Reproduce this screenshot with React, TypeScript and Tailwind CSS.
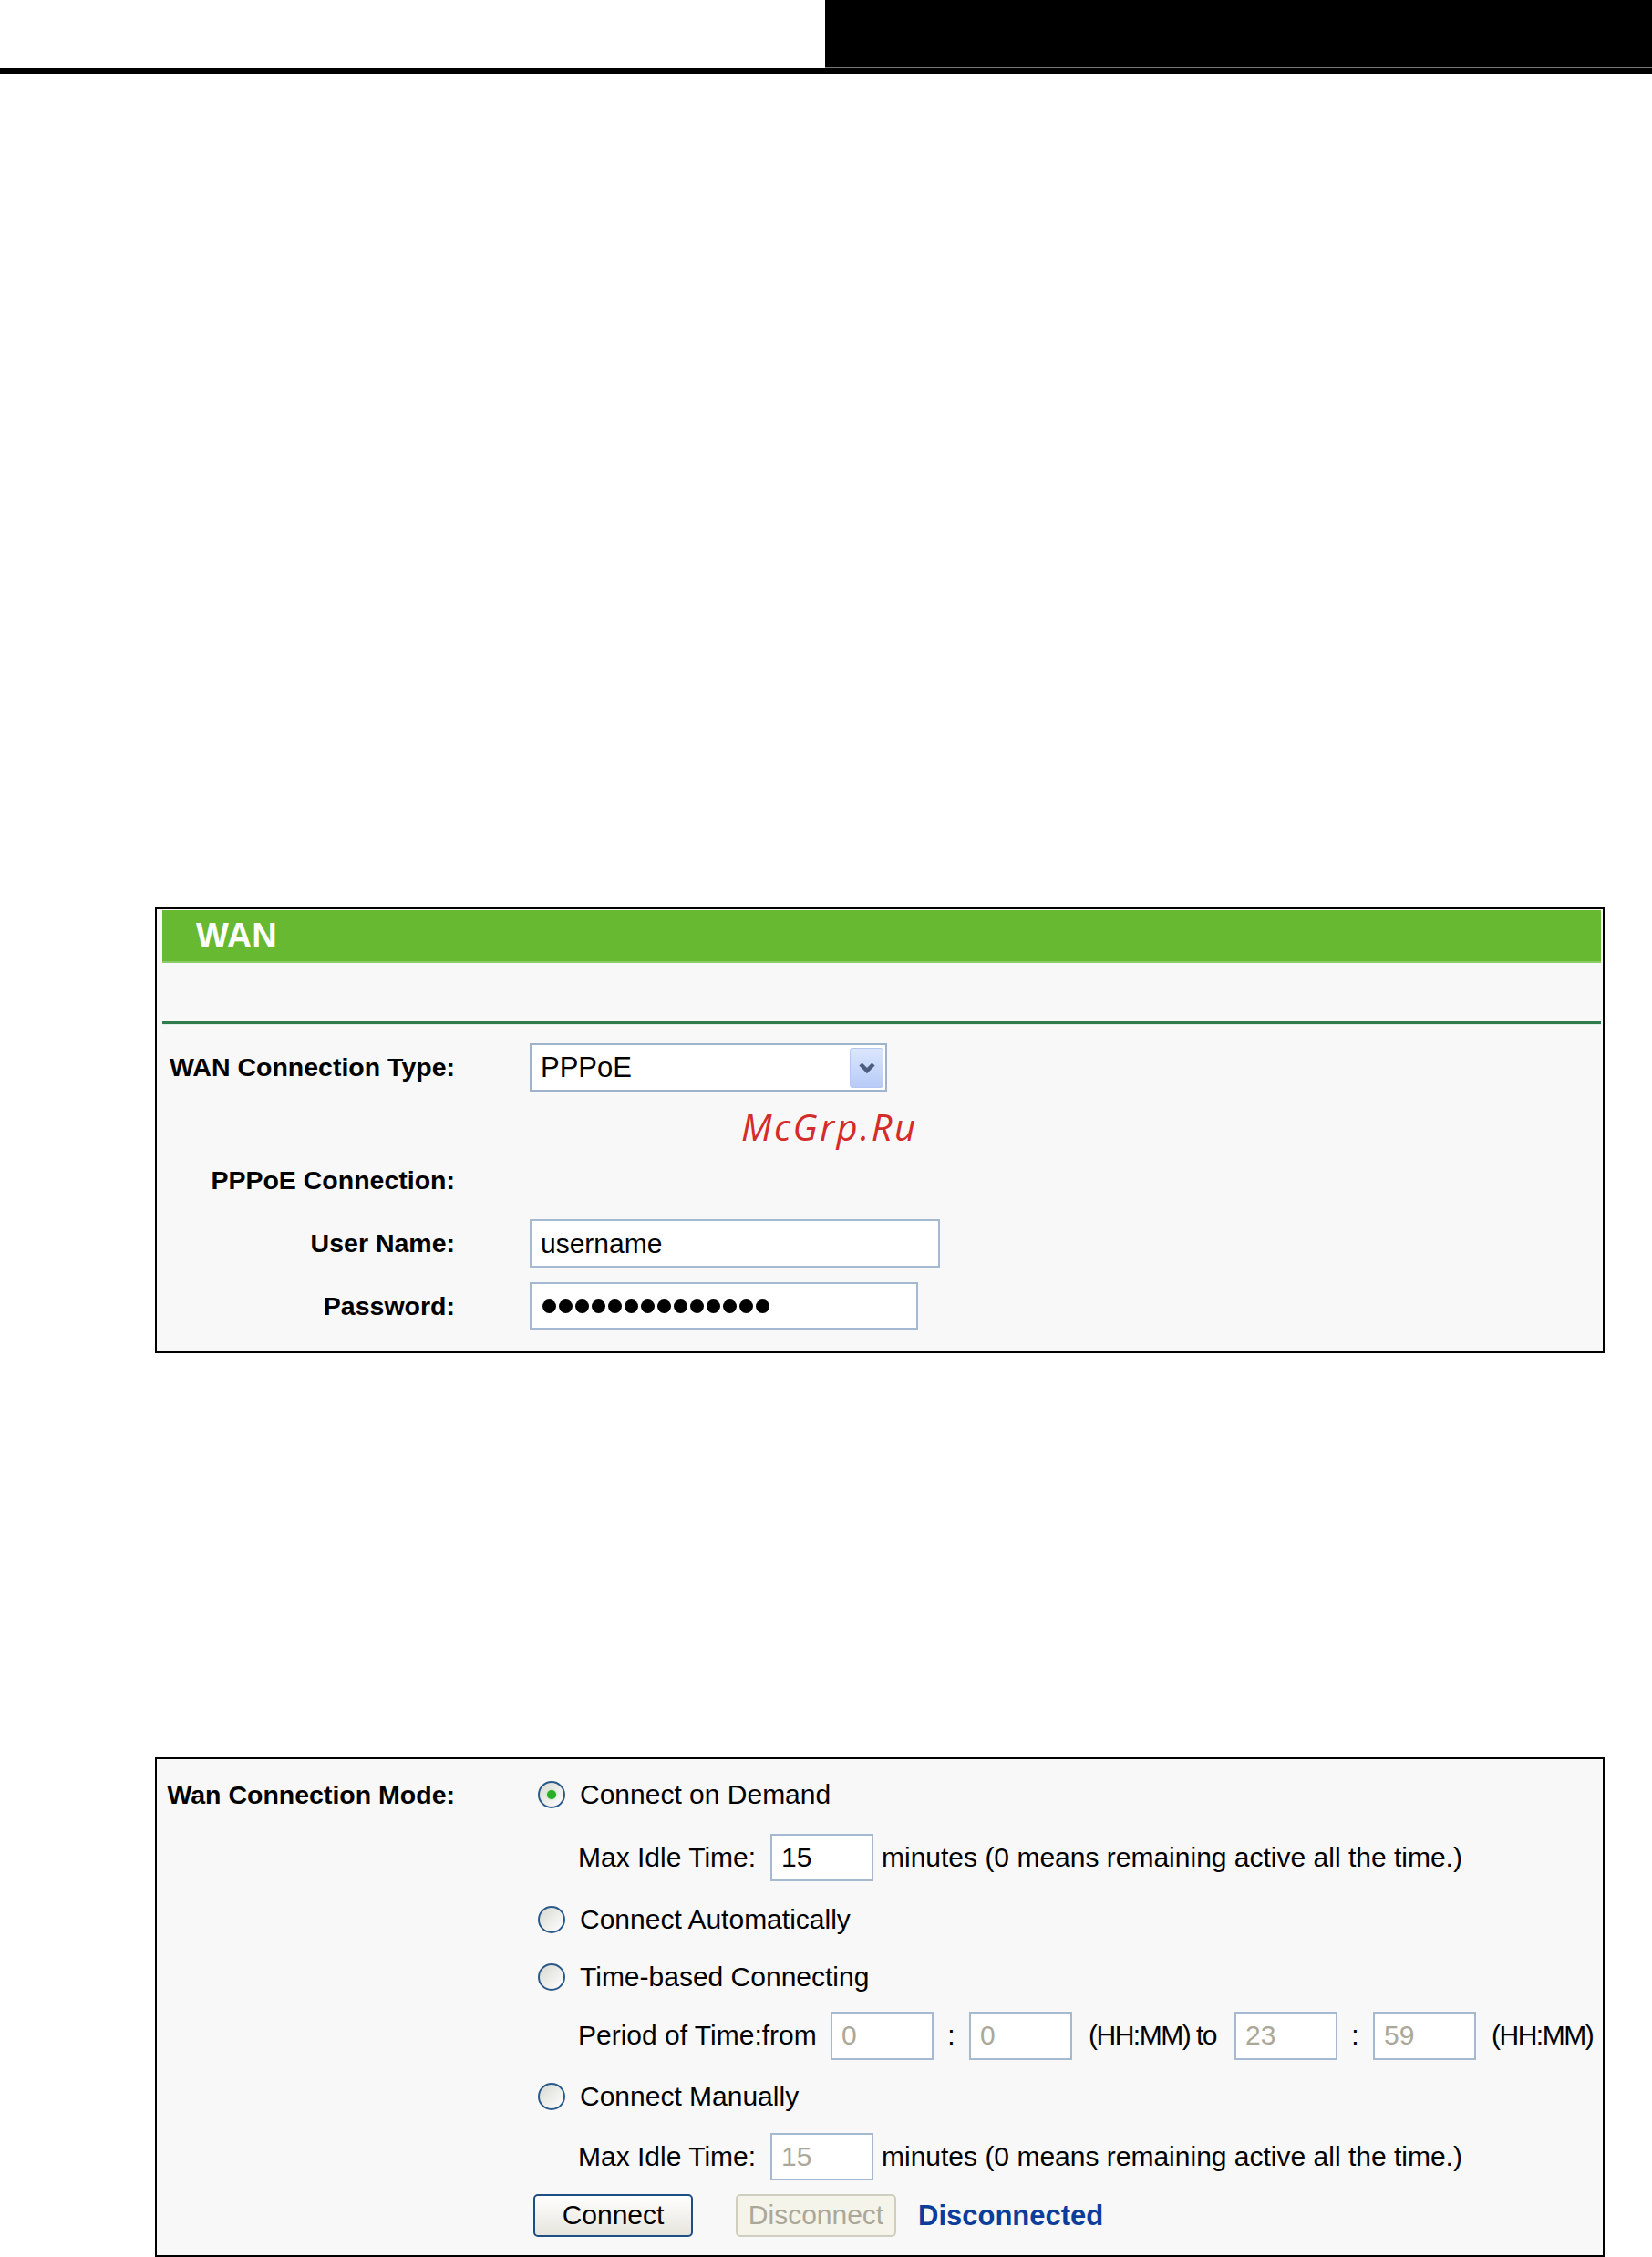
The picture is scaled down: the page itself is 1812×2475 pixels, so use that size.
import * as React from "react";

const font = "font-['Liberation_Sans',Arial,sans-serif]";

function Field({ w, h = 53, children, muted }: { w: number; h?: number; children?: React.ReactNode; muted?: boolean }) {
  return (
    <div
      className={`flex items-center border-2 border-[#a5b9d1] bg-white pl-[10px] text-[30px] leading-none ${muted ? "text-[#aca899]" : "text-black"}`}
      style={{ width: w, height: h }}
    >
      {children}
    </div>
  );
}

function Radio({ checked }: { checked?: boolean }) {
  return (
    <span className="flex h-[30px] w-[30px] shrink-0 items-center justify-center rounded-full border-2 border-[#2a5a8a] bg-linear-to-br from-[#d9d9d2] to-white">
      {checked && <span className="h-[10px] w-[10px] rounded-full bg-[#28b028] shadow-[0_0_2px_#7fd37f]" />}
    </span>
  );
}

function RadioRow({ label, checked, mt }: { label: string; checked?: boolean; mt: string }) {
  return (
    <div className={`flex h-[56px] items-center gap-[16px] pl-[5px] ${mt}`}>
      <Radio checked={checked} />
      <span className="text-[30px] leading-none">{label}</span>
    </div>
  );
}

function IdleRow({ value, muted, mt }: { value: string; muted?: boolean; mt: string }) {
  return (
    <div className={`flex h-[56px] items-center pl-[49px] ${mt}`}>
      <span className="w-[211px] text-[30px] leading-none">Max Idle Time:</span>
      <Field w={113} h={52} muted={muted}>
        {value}
      </Field>
      <span className="ml-[9px] text-[30px] leading-none whitespace-nowrap">
        minutes (0 means remaining active all the time.)
      </span>
    </div>
  );
}

export default function App() {
  return (
    <div className={`relative h-[2475px] w-[1812px] overflow-hidden bg-white text-black ${font}`}>
      {/* page header */}
      <div className="flex h-[75px]">
        <div className="w-[905px]" />
        <div className="flex-1 border-b border-[#777] bg-black" />
      </div>
      <div className="h-[6px] bg-black" />

      {/* WAN panel */}
      <div className="relative ml-[170px] mt-[914px] h-[489px] w-[1590px] border-2 border-black bg-[#f8f8f8]">
        <div className="pl-[6px] pr-[2px] pt-[1px]">
          <div className="flex h-[58px] items-center border-b-2 border-[#8ccc64] bg-[#68b932] pl-[37px] text-[38px] font-bold leading-none text-white">
            WAN
          </div>
          <div className="mt-[64px] h-[3px] bg-[#2f7d4e]" />
          <div className="h-[1px] bg-[#e3eee8]" />
        </div>

        <div className="mt-[20px] grid h-[53px] grid-cols-[327px_1fr] items-center gap-x-[82px]">
          <span className="text-right text-[28.5px] font-bold leading-none">WAN Connection Type:</span>
          <div className="relative flex h-[53px] w-[392px] items-center border-2 border-[#9fb4cc] bg-white pl-[10px] text-[31px] leading-none">
            PPPoE
            <div className="absolute right-[2px] top-[3px] flex h-[44px] w-[37px] items-center justify-center rounded-[3px] border border-[#b3c7f2] bg-linear-to-b from-[#dce7fe] to-[#b7cbf7]">
              <svg width="22" height="16" viewBox="0 0 22 16">
                <path d="M4 4 L11 11 L18 4" fill="none" stroke="#4b5e80" strokeWidth="4.5" />
              </svg>
            </div>
          </div>
        </div>

        <div className="absolute left-[641px] top-[219px] font-['Open_Sans',sans-serif] text-[40px] italic leading-none tracking-[2.5px] text-[#d42b2b]">
          McGrp.Ru
        </div>

        <div className="mt-[71px] grid h-[53px] grid-cols-[327px_1fr] items-center gap-x-[82px]">
          <span className="text-right text-[28.5px] font-bold leading-none">PPPoE Connection:</span>
          <span />
        </div>

        <div className="mt-[16px] grid h-[53px] grid-cols-[327px_1fr] items-center gap-x-[82px]">
          <span className="text-right text-[28.5px] font-bold leading-none">User Name:</span>
          <Field w={450}>username</Field>
        </div>

        <div className="mt-[16px] grid h-[52px] grid-cols-[327px_1fr] items-center gap-x-[82px]">
          <span className="text-right text-[28.5px] font-bold leading-none">Password:</span>
          <div className="flex h-[52px] w-[426px] items-center gap-[3px] border-2 border-[#a5b9d1] bg-white pl-[12px]">
            {Array.from({ length: 14 }).map((_, i) => (
              <span key={i} className="h-[15px] w-[15px] rounded-full bg-black" />
            ))}
          </div>
        </div>
      </div>

      {/* connection mode panel */}
      <div className="ml-[170px] mt-[443px] flex h-[548px] w-[1590px] border-2 border-black bg-[#f8f8f8]">
        <div className="w-[327px] pt-[11px]">
          <div className="flex h-[56px] items-center justify-end text-[28.5px] font-bold leading-none">
            Wan Connection Mode:
          </div>
        </div>

        <div className="ml-[86px] flex flex-col pt-[11px]">
          <RadioRow label="Connect on Demand" checked mt="" />
          <IdleRow value="15" mt="mt-[13px]" />
          <RadioRow label="Connect Automatically" mt="mt-[12px]" />
          <RadioRow label="Time-based Connecting" mt="mt-[7px]" />

          <div className="mt-[8px] flex h-[56px] items-center pl-[49px] text-[30px] leading-none whitespace-nowrap">
            <span className="w-[277px]">Period of Time:from</span>
            <Field w={113} muted>0</Field>
            <span className="w-[39px] text-center">:</span>
            <Field w={113} muted>0</Field>
            <span className="w-[178px] pl-[18px] tracking-[-1.5px]">(HH:MM) to</span>
            <Field w={113} muted>23</Field>
            <span className="w-[39px] text-center">:</span>
            <Field w={113} muted>59</Field>
            <span className="pl-[17px] tracking-[-1.5px]">(HH:MM)</span>
          </div>

          <RadioRow label="Connect Manually" mt="mt-[11px]" />
          <IdleRow value="15" muted mt="mt-[10px]" />

          <div className="mt-[8px] flex h-[56px] items-center">
            <button className="h-[47px] w-[175px] rounded-[5px] border-2 border-[#1f4f82] bg-linear-to-b from-white to-[#e6e4dc] text-[30px] leading-none text-black">
              Connect
            </button>
            <button className="ml-[47px] h-[47px] w-[176px] rounded-[5px] border-2 border-[#d0cebf] bg-[#f5f4ea] text-[30px] leading-none text-[#aca899]">
              Disconnect
            </button>
            <span className="ml-[24px] text-[31px] font-bold leading-none text-[#0c3d9b]">Disconnected</span>
          </div>
        </div>
      </div>
    </div>
  );
}
